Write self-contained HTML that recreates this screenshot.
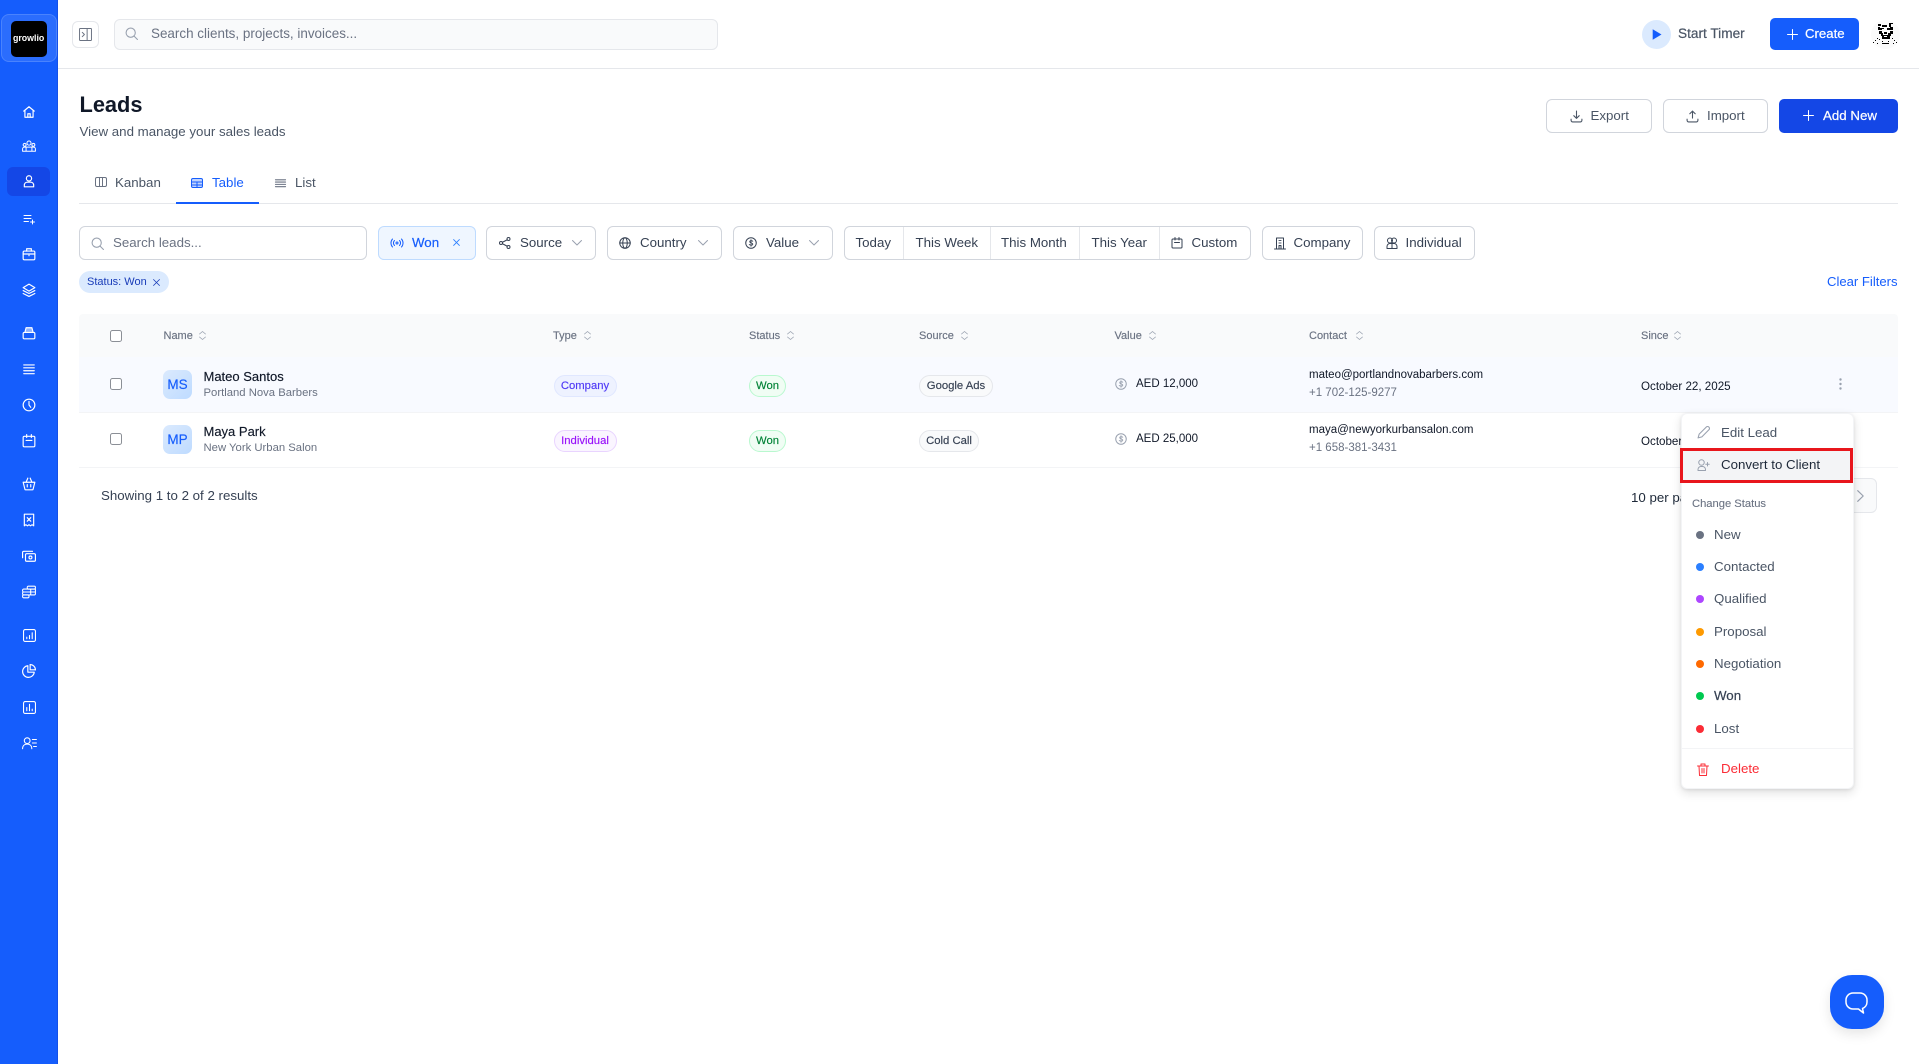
<!DOCTYPE html>
<html lang="en"><head><meta charset="utf-8"><title>Leads</title>
<style>
*{box-sizing:border-box}
html,body{margin:0;padding:0;width:1919px;height:1064px;overflow:hidden;background:#fff;font-family:"Liberation Sans",Arial,sans-serif;color:#364153}
.a{position:absolute}
.t{position:absolute;white-space:nowrap;line-height:16px;margin-top:-8px;font-size:13.3px}
.m{-webkit-text-stroke:.2px currentColor}
.btn{position:absolute;background:#fff;border:1px solid #d1d5dc;border-radius:6px}
svg{position:absolute;overflow:visible}
.i{fill:none;stroke:currentColor;stroke-linecap:round;stroke-linejoin:round}
.i:not([stroke-width]){stroke-width:2}
.s{color:#fff}
.cb{position:absolute;width:12px;height:12px;border:1.3px solid #8b8f96;border-radius:2.5px;background:#fff}
.th{font-size:11px;color:#6a7282;-webkit-text-stroke:.15px currentColor}
.pill{position:absolute;height:22px;border-radius:11px;border:1px solid;text-align:center;line-height:20px;font-size:11.3px;-webkit-text-stroke:.15px currentColor;white-space:nowrap}
.nm{font-size:13px;color:#101828;-webkit-text-stroke:.15px currentColor}
.sub{font-size:11.3px;color:#6a7282}
.cell{font-size:11.5px;color:#101828}
.dot{position:absolute;width:8px;height:8px;border-radius:50%;left:1695.500px}
.av{position:absolute;left:163px;width:29px;height:29px;border-radius:7px;background:linear-gradient(135deg,#dbeafe,#bedbff);color:#155dfc;font-size:13.5px;line-height:29px;text-align:center;-webkit-text-stroke:.15px currentColor}
</style></head><body>

<!-- sidebar -->
<div class="a" style="left:0;top:0;width:58px;height:1064px;background:#155dfc;border-right:1px solid #1450e8"></div>
<div class="a" style="left:1px;top:14px;width:56px;height:48px;background:#2b6dfd;border:1px solid #4a83fd;border-radius:8px"></div>
<div class="a" style="left:11px;top:21px;width:36px;height:36px;background:#000;border-radius:5px"></div>
<div class="t" style="left:13px;top:38px;font-size:8.800px;font-weight:700;color:#fff">growlio</div>
<div class="a" style="left:7px;top:167px;width:43px;height:29px;background:#1447e6;border-radius:6px"></div>

<svg class="i s" style="left:22px;top:105px" width="14" height="14" viewBox="0 0 24 24"><path d="M3 10.500 12 3l9 7.500M5 9v12h14V9M10 21v-6h4v6"/></svg>
<svg class="i s" style="left:22px;top:139px" width="14" height="14" viewBox="0 0 24 24" stroke-width="1.700"><circle cx="12" cy="7" r="3.500"/><circle cx="4.500" cy="10" r="2.500"/><circle cx="19.500" cy="10" r="2.500"/><path d="M1 21v-4a3 3 0 0 1 3-3h16a3 3 0 0 1 3 3v4zM7 21v-6M17 21v-6"/></svg>
<svg class="i s" style="left:22px;top:174px" width="14" height="14" viewBox="0 0 24 24"><circle cx="12" cy="7.500" r="4.500"/><path d="M4 22v-3a5 5 0 0 1 5-5h6a5 5 0 0 1 5 5v3z"/></svg>
<svg class="i s" style="left:23px;top:213px" width="12" height="12" viewBox="0 0 24 24"><path d="M2 5h14M2 11h14M2 17h9M19 14v8M15 18h8"/></svg>
<svg class="i s" style="left:22px;top:247px" width="14" height="14" viewBox="0 0 24 24"><rect x="2" y="7" width="20" height="15" rx="2"/><path d="M8 7V3h8v4M2 12h20M12 14v1"/></svg>
<svg class="i s" style="left:22px;top:283px" width="14" height="14" viewBox="0 0 24 24"><path d="M12 2 2 8l10 6 10-6zM2 13l10 5 10-5M2 18l10 5 10-5"/></svg>
<svg class="i s" style="left:22px;top:326px" width="14" height="14" viewBox="0 0 24 24"><rect x="2" y="11" width="20" height="11" rx="2"/><path d="M5 11 7 3h10l2 8" fill="#ffffff88"/></svg>
<svg class="i s" style="left:22px;top:362px" width="14" height="14" viewBox="0 0 24 24"><path d="M3 5h18M3 10h18M3 15h18M3 20h18"/></svg>
<svg class="i s" style="left:22px;top:398px" width="14" height="14" viewBox="0 0 24 24"><circle cx="12" cy="12" r="10"/><path d="M12 6v6l3 4"/></svg>
<svg class="i s" style="left:22px;top:434px" width="14" height="14" viewBox="0 0 24 24"><rect x="2" y="4" width="20" height="18" rx="2"/><path d="M8 1v5M16 1v5M7 11h10"/></svg>
<svg class="i s" style="left:22px;top:477px" width="14" height="14" viewBox="0 0 24 24"><path d="M2 9h20l-3 12a1 1 0 0 1-1 1H6a1 1 0 0 1-1-1zM7 9l3-7M17 9l-3-7M9 13v4M15 13v4"/></svg>
<svg class="i s" style="left:22px;top:513px" width="14" height="14" viewBox="0 0 24 24"><path d="M4 2h16v20l-2.700-2-2.700 2-2.600-2-2.600 2-2.700-2L4 22zM9 8l6 6M15 8l-6 6"/></svg>
<svg class="i s" style="left:22px;top:549px" width="14" height="14" viewBox="0 0 24 24"><rect x="6" y="8" width="17" height="13" rx="2"/><path d="M18 4H3a2 2 0 0 0-2 2v9"/><circle cx="14.500" cy="14.500" r="2.500"/></svg>
<svg class="i s" style="left:22px;top:585px" width="14" height="14" viewBox="0 0 24 24" stroke-width="1.800"><rect x="9" y="2" width="14" height="5" rx="2"/><rect x="1" y="7" width="14" height="5" rx="2"/><rect x="1" y="12" width="14" height="5" rx="2"/><rect x="1" y="17" width="11" height="5" rx="2"/><path d="M15 7h8v5h-8M15 12h8v3a2 2 0 0 1-2 2h-6"/></svg>
<svg class="i s" style="left:23px;top:629px" width="13" height="13" viewBox="0 0 24 24"><rect x="1" y="1" width="22" height="22" rx="3"/><path d="M7 18v-3M12 18v-6M17 18V7"/></svg>
<svg class="i s" style="left:22px;top:664px" width="14" height="14" viewBox="0 0 24 24"><path d="M10 3a10 10 0 1 0 11 11H10z"/><path d="M14 1a9 9 0 0 1 9 9h-9z" stroke="none"/><path d="M14 1v9h9"/><path d="M14 1a9 9 0 0 1 9 9"/></svg>
<svg class="i s" style="left:23px;top:701px" width="13" height="13" viewBox="0 0 24 24"><rect x="1" y="1" width="22" height="22" rx="3"/><path d="M7 18v-6M12 18V6M17 18v-3"/></svg>
<svg class="i s" style="left:22px;top:736px" width="15" height="14" viewBox="0 0 26 24" stroke-width="1.800"><circle cx="9" cy="8" r="5"/><path d="M1 22c0-5 3-8 8-8s8 3 8 8M18 6h7M18 12h7M20 18h5"/></svg>

<!-- top bar -->
<div class="a" style="left:58px;top:68px;width:1861px;height:1px;background:#e5e7eb"></div>
<div class="a" style="left:72px;top:21px;width:27px;height:27px;border:1px solid #e5e7eb;border-radius:6px"></div>
<svg class="i" style="left:79px;top:28px;color:#6a7282" width="13" height="13" viewBox="0 0 24 24" stroke-width="1.800"><rect x="1" y="1" width="22" height="22" rx="1"/><path d="M15 1v22M6 8l4 4-4 4"/></svg>
<div class="a" style="left:114px;top:19px;width:604px;height:31px;background:#f9fafb;border:1px solid #e5e7eb;border-radius:6px"></div>
<svg class="i" style="left:125px;top:27px;color:#99a1af" width="13" height="13" viewBox="0 0 24 24"><circle cx="10.500" cy="10.500" r="8.500"/><path d="m17 17 6 6"/></svg>
<div class="t" style="left:151px;top:33.500px;font-size:13.450px;color:#6a7282">Search clients, projects, invoices...</div>

<div class="a" style="left:1642px;top:20px;width:29px;height:29px;background:#dbeafe;border-radius:50%"></div>
<svg style="left:1652px;top:29px" width="10" height="11" viewBox="0 0 10 11"><path d="M.7.300 9.500 5.500.7 10.700z" fill="#155dfc"/></svg>
<div class="t m" style="left:1678px;top:33.500px;font-size:13.650px;color:#4a5565">Start Timer</div>
<div class="a" style="left:1770px;top:18px;width:89px;height:32px;background:#155dfc;border-radius:5px"></div>
<svg class="i" style="left:1787px;top:29px;color:#fff" width="11" height="11" viewBox="0 0 11 11" stroke-width="1"><path d="M5.500.5v10M.5 5.500h10"/></svg>
<div class="t m" style="left:1805px;top:33.500px;color:#fff;font-size:13.200px">Create</div>
<div class="a" style="left:1871px;top:20px;width:29px;height:29px;background:#fafafa;border-radius:50%"></div>
<svg style="left:1871px;top:20px" width="29" height="29" viewBox="0 0 29 29" fill="#000">
<path d="M7 4h3v2H7zM11 5h5v2h-5zM18 3h4v1h-2v3h-2zM7 7h2v3H7zM19 7h3v3h-3zM9 8h4v1h-2v1H9zM16 8h3v2h-3z"/>
<path d="M8 11h3v3H8zM19 11h3v3h-3zM10 13h2v3h-2zM17 13h3v3h-3zM11 15h8v4h-8zM13 12h3v2h-3z"/>
<path d="M13 16h3v1h-3z" fill="#fff"/>
<path d="M6 18h1v1H6zM4 20h1v1H4zM2 22h1v1H2zM8 19h1v1H8zM21 18h1v1h-1zM23 20h1v1h-1zM25 22h1v1h-1zM11 21h1v1h-1zM17 21h1v1h-1zM11 23h7v1h-7zM6 23h1v1H6zM22 23h1v1h-1z"/></svg>

<!-- heading -->
<div class="t" style="left:79.500px;top:105px;font-size:21.800px;font-weight:700;color:#101828;line-height:26px;margin-top:-13px">Leads</div>
<div class="t" style="left:79.500px;top:131.500px;color:#4a5565">View and manage your sales leads</div>

<div class="btn" style="left:1546px;top:99px;width:106px;height:34px"></div>
<svg class="i" style="left:1570px;top:110px;color:#4a5565" width="13" height="13" viewBox="0 0 24 24"><path d="M12 2v13M7 10.500l5 5 5-5M2 17v2a3 3 0 0 0 3 3h14a3 3 0 0 0 3-3v-2"/></svg>
<div class="t" style="left:1590.500px;top:116px;color:#4a5565">Export</div>
<div class="btn" style="left:1663px;top:99px;width:105px;height:34px"></div>
<svg class="i" style="left:1686px;top:110px;color:#4a5565" width="13" height="13" viewBox="0 0 24 24"><path d="M12 15V2M7 7l5-5 5 5M2 17v2a3 3 0 0 0 3 3h14a3 3 0 0 0 3-3v-2"/></svg>
<div class="t" style="left:1707px;top:116px;color:#4a5565">Import</div>
<div class="a" style="left:1779px;top:99px;width:119px;height:34px;background:#1447e6;border-radius:5px"></div>
<svg class="i" style="left:1803px;top:110px;color:#fff" width="11" height="11" viewBox="0 0 11 11" stroke-width="1"><path d="M5.500.5v10M.5 5.500h10"/></svg>
<div class="t m" style="left:1823px;top:116px;color:#fff">Add New</div>

<!-- tabs -->
<div class="a" style="left:79px;top:203px;width:1819px;height:1px;background:#e5e7eb"></div>
<div class="a" style="left:176px;top:202px;width:83px;height:2px;background:#155dfc"></div>
<svg class="i" style="left:95px;top:176px;color:#6a7282" width="12" height="12" viewBox="0 0 24 24"><rect x="1" y="3" width="22" height="18" rx="3"/><path d="M9 3v18M15 3v18"/></svg>
<div class="t" style="left:115px;top:182.500px;color:#4a5565">Kanban</div>
<svg class="i" style="left:191px;top:177px;color:#155dfc" width="12" height="12" viewBox="0 0 24 24"><rect x="1" y="3" width="22" height="18" rx="3" fill="#155dfc44"/><path d="M1 10h22M1 16h22M12 10v11"/></svg>
<div class="t" style="left:212px;top:182.500px;color:#155dfc">Table</div>
<svg class="i" style="left:275px;top:177px;color:#6a7282" width="11" height="12" viewBox="0 0 24 24" stroke-width="2.400"><path d="M1 5h22M1 10h22M1 15h22M1 20h22"/></svg>
<div class="t" style="left:295px;top:182.500px;color:#4a5565">List</div>

<!-- filters -->
<div class="btn" style="left:79px;top:226px;width:288px;height:34px"></div>
<svg class="i" style="left:91px;top:237px;color:#99a1af" width="13" height="13" viewBox="0 0 24 24"><circle cx="10.500" cy="10.500" r="8.500"/><path d="m17 17 6 6"/></svg>
<div class="t" style="left:113px;top:243px;color:#6a7282">Search leads...</div>

<div class="btn" style="left:378px;top:226px;width:98px;height:34px;background:#eff6ff;border-color:#bedbff"></div>
<svg class="i" style="left:391px;top:237px;color:#155dfc" width="12" height="12" viewBox="0 0 24 24"><circle cx="12" cy="12" r="2"/><path d="M7 7a7 7 0 0 0 0 10M17 7a7 7 0 0 1 0 10M3 4a12 12 0 0 0 0 16M21 4a12 12 0 0 1 0 16"/></svg>
<div class="t m" style="left:412px;top:242.500px;color:#155dfc">Won</div>
<svg class="i" style="left:453px;top:239px;color:#2b7fff" width="7" height="7" viewBox="0 0 8 8" stroke-width="1"><path d="m.7.700 6.600 6.600M7.300.700.700 7.300"/></svg>

<div class="btn" style="left:486px;top:226px;width:110px;height:34px"></div>
<svg class="i" style="left:499px;top:237px;color:#364153" width="12" height="12" viewBox="0 0 24 24"><circle cx="4" cy="12" r="3"/><circle cx="19" cy="4" r="3"/><circle cx="19" cy="20" r="3"/><path d="m7 10.500 9.500-5M7 13.500l9.500 5"/></svg>
<div class="t" style="left:520px;top:242.500px">Source</div>
<svg class="i" style="left:572px;top:240px;color:#99a1af" width="10" height="6" viewBox="0 0 10 6" stroke-width="1"><path d="m.5.500 4.500 4.500L9.500.5"/></svg>

<div class="btn" style="left:607px;top:226px;width:115px;height:34px"></div>
<svg class="i" style="left:619px;top:237px;color:#364153" width="12" height="12" viewBox="0 0 24 24"><circle cx="12" cy="12" r="10.500"/><ellipse cx="12" cy="12" rx="4.500" ry="10.500"/><path d="M1.500 12h21"/></svg>
<div class="t" style="left:640px;top:242.500px">Country</div>
<svg class="i" style="left:698px;top:240px;color:#99a1af" width="10" height="6" viewBox="0 0 10 6" stroke-width="1"><path d="m.5.500 4.500 4.500L9.500.5"/></svg>

<div class="btn" style="left:733px;top:226px;width:100px;height:34px"></div>
<svg class="i" style="left:745px;top:237px;color:#364153" width="12" height="12" viewBox="0 0 24 24"><circle cx="12" cy="12" r="10.500"/><path d="M15.500 8.500c-1-1.300-6-1.800-6 1 0 2.800 6 1.700 6 4.700s-5.500 2.500-7 .8M12 5.500v13" stroke-width="1.800"/></svg>
<div class="t" style="left:766px;top:242.500px">Value</div>
<svg class="i" style="left:809px;top:240px;color:#99a1af" width="10" height="6" viewBox="0 0 10 6" stroke-width="1"><path d="m.5.500 4.500 4.500L9.500.5"/></svg>

<div class="btn" style="left:844px;top:226px;width:407px;height:34px"></div>
<div class="a" style="left:903px;top:227px;width:1px;height:32px;background:#e5e7eb"></div>
<div class="a" style="left:990px;top:227px;width:1px;height:32px;background:#e5e7eb"></div>
<div class="a" style="left:1079px;top:227px;width:1px;height:32px;background:#e5e7eb"></div>
<div class="a" style="left:1159px;top:227px;width:1px;height:32px;background:#e5e7eb"></div>
<div class="t" style="left:855.500px;top:242.500px">Today</div>
<div class="t" style="left:915.500px;top:242.500px">This Week</div>
<div class="t" style="left:1001px;top:242.500px">This Month</div>
<div class="t" style="left:1091.500px;top:242.500px">This Year</div>
<svg class="i" style="left:1171px;top:237px;color:#364153" width="12" height="12" viewBox="0 0 24 24"><rect x="2" y="4" width="20" height="18" rx="2"/><path d="M8 1v5M16 1v5M7 11h10"/></svg>
<div class="t" style="left:1191.500px;top:242.500px">Custom</div>

<div class="btn" style="left:1262px;top:226px;width:101px;height:34px"></div>
<svg class="i" style="left:1274px;top:237px;color:#364153" width="12" height="13" viewBox="0 0 24 26"><path d="M5 24V2h14v22M1 24h22M10 7h1M13 7h1M10 12h1M13 12h1M10 17h4v7h-4z"/></svg>
<div class="t" style="left:1293.500px;top:242.500px">Company</div>
<div class="btn" style="left:1374px;top:226px;width:101px;height:34px"></div>
<svg class="i" style="left:1386px;top:237px;color:#364153" width="12" height="12" viewBox="0 0 24 24"><circle cx="8" cy="7" r="5"/><circle cx="16" cy="7" r="5"/><path d="M2 23v-4a6 6 0 0 1 6-6h8a6 6 0 0 1 6 6v4zM12 13v10"/></svg>
<div class="t" style="left:1405.500px;top:242.500px">Individual</div>

<!-- chip row -->
<div class="a" style="left:79px;top:271px;width:90px;height:22px;background:#dbeafe;border-radius:11px"></div>
<div class="t" style="left:87px;top:282px;font-size:11px;color:#193cb8">Status: Won</div>
<svg class="i" style="left:153px;top:279px;color:#193cb8" width="7" height="7" viewBox="0 0 7 7" stroke-width=".8"><path d="m.5.500 6 6M6.500.5l-6 6"/></svg>
<div class="t" style="left:1827px;top:281.500px;color:#155dfc;font-size:13.100px">Clear Filters</div>

<!-- table -->
<div class="a" style="left:79px;top:314px;width:1819px;height:43px;background:#f9fafb;border-radius:4px 4px 0 0"></div>
<div class="a" style="left:79px;top:357px;width:1819px;height:55px;background:#f8faff"></div>
<div class="a" style="left:79px;top:412px;width:1819px;height:1px;background:#f3f4f6"></div>
<div class="a" style="left:79px;top:467px;width:1819px;height:1px;background:#f3f4f6"></div>

<div class="cb" style="left:110px;top:329.500px"></div>
<div class="t th" style="left:163.500px;top:335.500px">Name</div>
<div class="t th" style="left:553px;top:335.500px">Type</div>
<div class="t th" style="left:749px;top:335.500px">Status</div>
<div class="t th" style="left:919px;top:335.500px">Source</div>
<div class="t th" style="left:1114.500px;top:335.500px">Value</div>
<div class="t th" style="left:1309px;top:335.500px">Contact</div>
<div class="t th" style="left:1641px;top:335.500px">Since</div>
<svg class="i" style="left:199px;top:331px;color:#99a1af" width="7" height="9" viewBox="0 0 7 9" stroke-width=".8"><path d="m.5 3 3-2.500 3 2.500M.5 6l3 2.500L6.500 6"/></svg>
<svg class="i" style="left:584px;top:331px;color:#99a1af" width="7" height="9" viewBox="0 0 7 9" stroke-width=".8"><path d="m.5 3 3-2.500 3 2.500M.5 6l3 2.500L6.500 6"/></svg>
<svg class="i" style="left:787px;top:331px;color:#99a1af" width="7" height="9" viewBox="0 0 7 9" stroke-width=".8"><path d="m.5 3 3-2.500 3 2.500M.5 6l3 2.500L6.500 6"/></svg>
<svg class="i" style="left:961px;top:331px;color:#99a1af" width="7" height="9" viewBox="0 0 7 9" stroke-width=".8"><path d="m.5 3 3-2.500 3 2.500M.5 6l3 2.500L6.500 6"/></svg>
<svg class="i" style="left:1149px;top:331px;color:#99a1af" width="7" height="9" viewBox="0 0 7 9" stroke-width=".8"><path d="m.5 3 3-2.500 3 2.500M.5 6l3 2.500L6.500 6"/></svg>
<svg class="i" style="left:1356px;top:331px;color:#99a1af" width="7" height="9" viewBox="0 0 7 9" stroke-width=".8"><path d="m.5 3 3-2.500 3 2.500M.5 6l3 2.500L6.500 6"/></svg>
<svg class="i" style="left:1674px;top:331px;color:#99a1af" width="7" height="9" viewBox="0 0 7 9" stroke-width=".8"><path d="m.5 3 3-2.500 3 2.500M.5 6l3 2.500L6.500 6"/></svg>

<!-- row 1 -->
<div class="cb" style="left:110px;top:378px"></div>
<div class="av" style="top:370px">MS</div>
<div class="t nm" style="left:203.500px;top:377px">Mateo Santos</div>
<div class="t sub" style="left:203.500px;top:392.500px">Portland Nova Barbers</div>
<div class="pill" style="left:553.500px;top:375px;width:63px;color:#4f39f6;background:#eef2ff;border-color:#e0e7ff">Company</div>
<div class="pill" style="left:749px;top:375px;width:37px;color:#008236;background:#f0fdf4;border-color:#b9f8cf">Won</div>
<div class="pill" style="left:919px;top:375px;width:74px;color:#364153;background:#f9fafb;border-color:#e5e7eb">Google Ads</div>
<svg class="i" style="left:1115px;top:378px;color:#99a1af" width="12" height="12" viewBox="0 0 24 24"><circle cx="12" cy="12" r="10.500"/><path d="M15.500 8.500c-1-1.300-6-1.800-6 1 0 2.800 6 1.700 6 4.700s-5.500 2.500-7 .8M12 5.500v13" stroke-width="1.800"/></svg>
<div class="t cell" style="left:1136px;top:384px">AED 12,000</div>
<div class="t cell" style="left:1309px;top:374.500px">mateo@portlandnovabarbers.com</div>
<div class="t cell" style="left:1309px;top:392.500px;color:#6a7282">+1 702-125-9277</div>
<div class="t cell" style="left:1641px;top:386.500px;font-size:11.600px">October 22, 2025</div>
<svg style="left:1838.500px;top:378px;fill:#99a1af" width="3" height="12" viewBox="0 0 3 12"><circle cx="1.500" cy="1.500" r="1.200"/><circle cx="1.500" cy="6" r="1.200"/><circle cx="1.500" cy="10.500" r="1.200"/></svg>

<!-- row 2 -->
<div class="cb" style="left:110px;top:433px"></div>
<div class="av" style="top:425px">MP</div>
<div class="t nm" style="left:203.500px;top:432px">Maya Park</div>
<div class="t sub" style="left:203.500px;top:447.500px">New York Urban Salon</div>
<div class="pill" style="left:553.500px;top:430px;width:63px;color:#9810fa;background:#faf5ff;border-color:#e9d4ff">Individual</div>
<div class="pill" style="left:749px;top:430px;width:37px;color:#008236;background:#f0fdf4;border-color:#b9f8cf">Won</div>
<div class="pill" style="left:919px;top:430px;width:60px;color:#364153;background:#f9fafb;border-color:#e5e7eb">Cold Call</div>
<svg class="i" style="left:1115px;top:433px;color:#99a1af" width="12" height="12" viewBox="0 0 24 24"><circle cx="12" cy="12" r="10.500"/><path d="M15.500 8.500c-1-1.300-6-1.800-6 1 0 2.800 6 1.700 6 4.700s-5.500 2.500-7 .8M12 5.500v13" stroke-width="1.800"/></svg>
<div class="t cell" style="left:1136px;top:439px">AED 25,000</div>
<div class="t cell" style="left:1309px;top:429.500px">maya@newyorkurbansalon.com</div>
<div class="t cell" style="left:1309px;top:447.500px;color:#6a7282">+1 658-381-3431</div>
<div class="t cell" style="left:1641px;top:441.500px;font-size:11.600px">October 22, 2025</div>

<!-- footer -->
<div class="t" style="left:101px;top:496px;color:#364153">Showing 1 to 2 of 2 results</div>
<div class="t" style="left:1631px;top:497.500px;color:#1e2939">10 per page</div>
<div class="a" style="left:1835px;top:478px;width:42px;height:35px;background:#f9fafb;border:1px solid #e5e7eb;border-radius:6px"></div>
<svg class="i" style="left:1857px;top:490px;color:#99a1af" width="7" height="12" viewBox="0 0 7 12" stroke-width="1.200"><path d="m.7.700 5.500 5.300L.7 11.300"/></svg>

<!-- dropdown -->
<div class="a" style="left:1681px;top:413px;width:173px;height:376px;background:#fff;border:1px solid #f3f4f6;border-radius:6px;box-shadow:0 4px 10px rgba(0,0,0,.12),0 1px 3px rgba(0,0,0,.08)"></div>
<svg class="i" style="left:1697px;top:426px;color:#99a1af" width="13" height="13" viewBox="0 0 24 24"><path d="M2 22l2-7L17 2a3 3 0 0 1 5 5L9 20z"/></svg>
<div class="t" style="left:1721px;top:432.500px;color:#4a5565">Edit Lead</div>
<div class="a" style="left:1680px;top:448px;width:173px;height:35px;background:#f3f4f6;border:3.500px solid #e8161c"></div>
<svg class="i" style="left:1697px;top:459px;color:#99a1af" width="13" height="12" viewBox="0 0 26 24"><circle cx="9" cy="7" r="5.500"/><path d="M2 23v-2a6 6 0 0 1 6-6h3a6 6 0 0 1 6 6v2zM21 7v7M17.500 10.500h7"/></svg>
<div class="t" style="left:1721px;top:465px;color:#1e2939">Convert to Client</div>
<div class="t" style="left:1692px;top:504px;font-size:11.200px;color:#6a7282;-webkit-text-stroke:.1px currentColor">Change Status</div>

<div class="dot" style="top:531px;background:#6a7282"></div><div class="t" style="left:1714px;top:534.500px;color:#4a5565">New</div>
<div class="dot" style="top:563px;background:#2b7fff"></div><div class="t" style="left:1714px;top:566.500px;color:#4a5565">Contacted</div>
<div class="dot" style="top:595px;background:#ad46ff"></div><div class="t" style="left:1714px;top:598.500px;color:#4a5565">Qualified</div>
<div class="dot" style="top:628px;background:#fe9a00"></div><div class="t" style="left:1714px;top:631.500px;color:#4a5565">Proposal</div>
<div class="dot" style="top:660px;background:#ff6900"></div><div class="t" style="left:1714px;top:663.500px;color:#4a5565">Negotiation</div>
<div class="dot" style="top:692px;background:#00c950"></div><div class="t m" style="left:1714px;top:695.500px;color:#364153">Won</div>
<div class="dot" style="top:724.500px;background:#fb2c36"></div><div class="t" style="left:1714px;top:728.500px;color:#4a5565">Lost</div>
<div class="a" style="left:1682px;top:748px;width:171px;height:1px;background:#f3f4f6"></div>
<svg class="i" style="left:1697px;top:763px;color:#fb2c36" width="12" height="13" viewBox="0 0 24 26"><path d="M1 6h22M8 6V2h8v4M4 6l1 19h14l1-19M10 11v9M14 11v9"/></svg>
<div class="t" style="left:1721px;top:769px;color:#fb2c36">Delete</div>

<!-- chat -->
<div class="a" style="left:1830px;top:975px;width:54px;height:54px;background:#155dfc;border-radius:22px;box-shadow:0 5px 12px rgba(0,0,0,.1)"></div>
<svg class="i" style="left:1845px;top:992px;color:#fff" width="23" height="22" viewBox="0 0 23 22" stroke-width="1.500"><path d="M8 1h7a7 7 0 0 1 7 7v2a7 7 0 0 1-4.500 6.500L18.500 21l-5-4H8a7 7 0 0 1-7-7V8a7 7 0 0 1 7-7z"/></svg>

</body></html>
